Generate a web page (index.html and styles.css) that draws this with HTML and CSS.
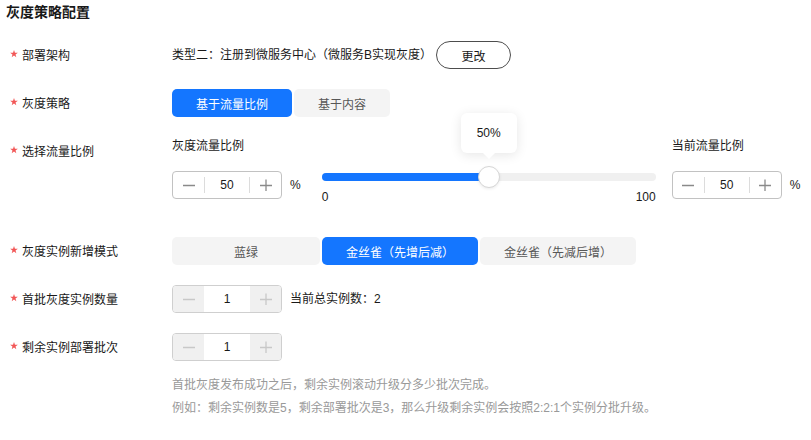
FILE: index.html
```html
<!DOCTYPE html>
<html lang="zh">
<head>
<meta charset="utf-8">
<title>灰度策略配置</title>
<link rel="stylesheet" href="styles.css">
</head>
<body>
<div class="page">
  <h1 class="title">灰度策略配置</h1>
  <div class="form">
    <div class="row">
      <div class="label"><svg class="star" viewBox="0 0 10 10"><polygon points="5,0 6.2,3.4 9.8,3.5 6.9,5.6 7.9,9.1 5,7 2.1,9.1 3.1,5.6 0.2,3.5 3.8,3.4"/></svg>部署架构</div>
      <div class="content inline">
        <span class="text">类型二：注册到微服务中心（微服务B实现灰度）</span>
        <button class="btn-outline">更改</button>
      </div>
    </div>

    <div class="row">
      <div class="label"><svg class="star" viewBox="0 0 10 10"><polygon points="5,0 6.2,3.4 9.8,3.5 6.9,5.6 7.9,9.1 5,7 2.1,9.1 3.1,5.6 0.2,3.5 3.8,3.4"/></svg>灰度策略</div>
      <div class="content seg">
        <button class="seg-btn active w120">基于流量比例</button>
        <button class="seg-btn w96">基于内容</button>
      </div>
    </div>

    <div class="row row-ratio">
      <div class="label"><svg class="star" viewBox="0 0 10 10"><polygon points="5,0 6.2,3.4 9.8,3.5 6.9,5.6 7.9,9.1 5,7 2.1,9.1 3.1,5.6 0.2,3.5 3.8,3.4"/></svg>选择流量比例</div>
      <div class="content ratio">
        <div class="ratio-col">
          <div class="sublabel">灰度流量比例</div>
          <div class="num-line">
            <div class="stepper">
              <span class="step"><svg width="12" height="12" viewBox="0 0 12 12"><path d="M0 6.5H12" stroke="currentColor" stroke-width="1.3"/></svg></span>
              <span class="val">50</span>
              <span class="step"><svg width="12" height="12" viewBox="0 0 12 12"><path d="M0 6.5H12M6 0.5V12.5" stroke="currentColor" stroke-width="1.3"/></svg></span>
            </div>
            <span class="pct">%</span>
          </div>
        </div>
        <div class="slider">
          <div class="track">
            <div class="fill" style="width:50%"></div>
            <div class="knob" style="left:50%"></div>
            <div class="tip" style="left:50%">50%</div>
          </div>
          <div class="scale"><span>0</span><span>100</span></div>
        </div>
        <div class="ratio-col right">
          <div class="sublabel">当前流量比例</div>
          <div class="num-line">
            <div class="stepper">
              <span class="step"><svg width="12" height="12" viewBox="0 0 12 12"><path d="M0 6.5H12" stroke="currentColor" stroke-width="1.3"/></svg></span>
              <span class="val">50</span>
              <span class="step"><svg width="12" height="12" viewBox="0 0 12 12"><path d="M0 6.5H12M6 0.5V12.5" stroke="currentColor" stroke-width="1.3"/></svg></span>
            </div>
            <span class="pct">%</span>
          </div>
        </div>
      </div>
    </div>

    <div class="row">
      <div class="label"><svg class="star" viewBox="0 0 10 10"><polygon points="5,0 6.2,3.4 9.8,3.5 6.9,5.6 7.9,9.1 5,7 2.1,9.1 3.1,5.6 0.2,3.5 3.8,3.4"/></svg>灰度实例新增模式</div>
      <div class="content seg">
        <button class="seg-btn w148">蓝绿</button>
        <button class="seg-btn active w156">金丝雀（先增后减）</button>
        <button class="seg-btn w156">金丝雀（先减后增）</button>
      </div>
    </div>

    <div class="row">
      <div class="label"><svg class="star" viewBox="0 0 10 10"><polygon points="5,0 6.2,3.4 9.8,3.5 6.9,5.6 7.9,9.1 5,7 2.1,9.1 3.1,5.6 0.2,3.5 3.8,3.4"/></svg>首批灰度实例数量</div>
      <div class="content inline">
        <div class="stepper disabled">
          <span class="step"><svg width="12" height="12" viewBox="0 0 12 12"><path d="M0 6.5H12" stroke="currentColor" stroke-width="1.3"/></svg></span>
          <span class="val">1</span>
          <span class="step"><svg width="12" height="12" viewBox="0 0 12 12"><path d="M0 6.5H12M6 0.5V12.5" stroke="currentColor" stroke-width="1.3"/></svg></span>
        </div>
        <span class="total">当前总实例数：2</span>
      </div>
    </div>

    <div class="row">
      <div class="label"><svg class="star" viewBox="0 0 10 10"><polygon points="5,0 6.2,3.4 9.8,3.5 6.9,5.6 7.9,9.1 5,7 2.1,9.1 3.1,5.6 0.2,3.5 3.8,3.4"/></svg>剩余实例部署批次</div>
      <div class="content inline">
        <div class="stepper disabled">
          <span class="step"><svg width="12" height="12" viewBox="0 0 12 12"><path d="M0 6.5H12" stroke="currentColor" stroke-width="1.3"/></svg></span>
          <span class="val">1</span>
          <span class="step"><svg width="12" height="12" viewBox="0 0 12 12"><path d="M0 6.5H12M6 0.5V12.5" stroke="currentColor" stroke-width="1.3"/></svg></span>
        </div>
      </div>
    </div>

    <div class="hints">
      <p>首批灰度发布成功之后，剩余实例滚动升级分多少批次完成。</p>
      <p>例如：剩余实例数是5，剩余部署批次是3，那么升级剩余实例会按照2:2:1个实例分批升级。</p>
    </div>
  </div>
</div>
</body>
</html>
```

FILE: styles.css
```css
* { box-sizing: border-box; }
html, body {
  margin: 0;
  padding: 0;
  background: #fff;
}
body {
  font-family: "Liberation Sans", "Noto Sans CJK SC", sans-serif;
  font-size: 12px;
  color: #191919;
}
.page {
  padding-top: 2px;
}
.title {
  margin: 0 0 19px 6px;
  font-size: 14px;
  line-height: 20px;
  font-weight: bold;
  color: #191919;
}
.form {
  display: flex;
  flex-direction: column;
  gap: 20px;
  padding-left: 10px;
}
.row {
  display: flex;
  align-items: flex-start;
}
.label {
  width: 162px;
  flex: none;
  height: 28px;
  padding-bottom: 2px;
  display: flex;
  align-items: center;
  white-space: nowrap;
}
.star {
  width: 8px;
  height: 8px;
  fill: #f25757;
  margin-right: 4px;
  flex: none;
}
.content {
  display: flex;
  align-items: center;
}
.inline { height: 28px; }
.text { line-height: 28px; }
.btn-outline {
  margin-left: 4px;
  width: 75px;
  height: 28px;
  border: 1px solid #4d4d4d;
  border-radius: 14px;
  background: #fff;
  font: inherit;
  color: #191919;
  padding: 0;
}
.seg { gap: 2px; }
.seg-btn {
  height: 28px;
  border: none;
  border-radius: 5px;
  background: #f4f4f4;
  color: #575757;
  font: inherit;
  padding: 0;
}
.seg-btn.active {
  background: #1476ff;
  color: #fff;
}
.w120 { width: 120px; }
.w96 { width: 96px; }
.w148 { width: 148px; }
.w156 { width: 156px; }

/* ratio row */
.ratio {
  align-items: flex-start;
  height: 80px;
}
.ratio-col { display: flex; flex-direction: column; }
.ratio-col.right { margin-left: 16px; }
.sublabel {
  line-height: 18px;
  height: 18px;
  white-space: nowrap;
}
.num-line {
  margin-top: 16px;
  display: flex;
  align-items: center;
  gap: 8px;
}
.pct { line-height: 28px; }

.stepper {
  width: 110px;
  height: 28px;
  border: 1px solid #c2c2c2;
  border-radius: 4px;
  display: grid;
  grid-template-columns: 31px 1fr 31px;
  overflow: hidden;
  background: #fff;
}
.step {
  display: flex;
  align-items: center;
  justify-content: center;
  color: #8a8a8a;
}
.val {
  position: relative;
  display: flex;
  align-items: center;
  justify-content: center;
  color: #191919;
}
.val::before, .val::after {
  content: "";
  position: absolute;
  top: 5px;
  bottom: 5px;
  width: 1px;
  background: #dcdcdc;
}
.val::before { left: 0; }
.val::after { right: 0; }
.stepper.disabled { border-color: #cfcfcf; }
.stepper.disabled .step {
  background: #f0f0f0;
  color: #c8c8c8;
}
.stepper.disabled .val::before,
.stepper.disabled .val::after { display: none; }

.total {
  margin-left: 8px;
  line-height: 28px;
}

.slider {
  width: 334px;
  margin-left: 21px;
  padding-top: 36px;
}
.track {
  position: relative;
  height: 8px;
  border-radius: 4px;
  background: #f0f0f0;
}
.fill {
  height: 8px;
  border-radius: 4px;
  background: #1476ff;
}
.knob {
  position: absolute;
  top: -7px;
  width: 22px;
  height: 22px;
  margin-left: -11px;
  border-radius: 50%;
  background: #fff;
  border: 1px solid #d6d6d6;
  box-shadow: 0 1px 3px rgba(0,0,0,0.08);
}
.tip {
  position: absolute;
  top: -60px;
  width: 56px;
  height: 40px;
  margin-left: -28px;
  background: #fff;
  border-radius: 6px;
  box-shadow: 0 2px 12px rgba(0,0,0,0.10);
  display: flex;
  align-items: center;
  justify-content: center;
  color: #191919;
}
.tip::after {
  content: "";
  position: absolute;
  left: 50%;
  bottom: -6px;
  margin-left: -6px;
  border-left: 6px solid transparent;
  border-right: 6px solid transparent;
  border-top: 6px solid #fff;
}
.scale {
  margin-top: 9px;
  display: flex;
  justify-content: space-between;
  line-height: 14px;
  color: #191919;
}

.hints {
  margin-left: 162px;
  margin-top: -7px;
  color: #999;
}
.hints p {
  margin: 0;
  line-height: 23px;
}
```
